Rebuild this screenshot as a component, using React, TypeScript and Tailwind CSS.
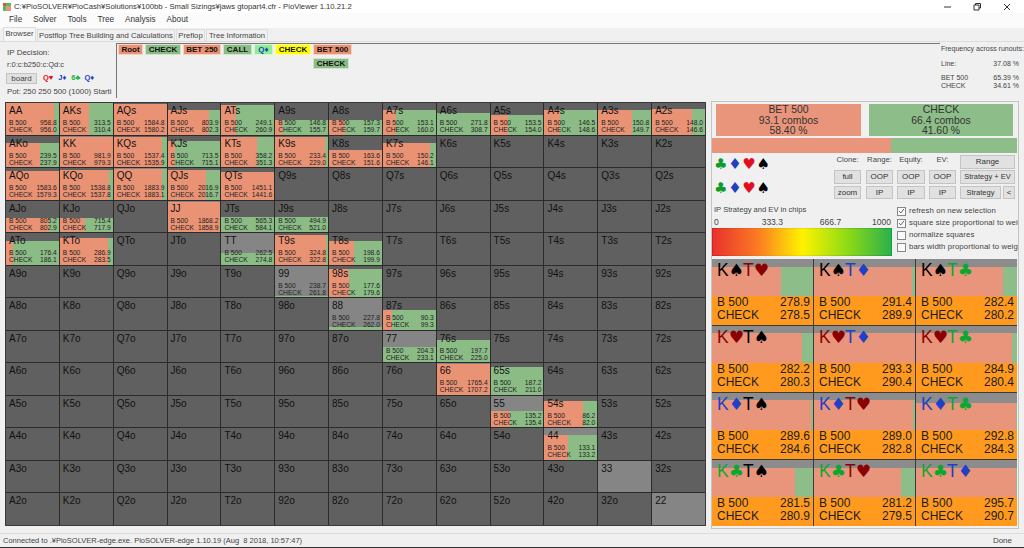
import React from "react";

const RANKS = "AKQJT98765432".split("");
type D = [string, string, number, number];
const DATA: Record<string, D> = {
  AA: ["958.8", "956.0", 0, 90],
  AKs: ["313.5", "310.4", 0, 55],
  AQs: ["1584.8", "1580.2", 1, 100],
  AJs: ["803.9", "802.3", 7, 79],
  ATs: ["249.1", "260.9", 2, 27],
  A9s: ["146.8", "155.7", 17, 14],
  A8s: ["157.3", "159.7", 17, 31],
  A7s: ["153.1", "160.0", 7, 24],
  A6s: ["271.8", "308.7", 10, 0],
  A5s: ["153.5", "154.0", 12, 33],
  A4s: ["146.5", "148.6", 7, 30],
  A3s: ["150.8", "149.7", 7, 63],
  A2s: ["148.0", "146.6", 6, 75],
  AKo: ["239.5", "237.9", 7, 65],
  KK: ["981.9", "979.3", 1, 100],
  KQs: ["1537.4", "1535.9", 1, 91],
  KJs: ["713.5", "715.1", 5, 15],
  KTs: ["358.2", "351.3", 1, 67],
  K9s: ["233.4", "229.0", 1, 95],
  K8s: ["163.6", "151.6", 14, 100],
  K7s: ["150.2", "146.1", 7, 89],
  AQo: ["1583.6", "1579.3", 3, 100],
  KQo: ["1538.8", "1537.8", 2, 93],
  QQ: ["1883.9", "1883.1", 1, 91],
  QJs: ["2016.9", "2016.7", 2, 72],
  QTs: ["1451.1", "1441.6", 4, 100],
  AJo: ["805.2", "802.9", 17, 82],
  KJo: ["715.4", "717.9", 17, 48],
  JJ: ["1868.2", "1858.9", 1, 100],
  JTs: ["565.3", "584.1", 16, 0],
  J9s: ["494.9", "521.0", 16, 0],
  ATo: ["176.4", "186.1", 8, 13],
  KTo: ["286.9", "283.5", 5, 91],
  TT: ["262.5", "274.8", 20, 0],
  T9s: ["324.8", "322.8", 2, 96],
  T8s: ["198.6", "199.9", 8, 48],
  "99": ["238.7", "261.8", 30, 0],
  "98s": ["177.6", "179.6", 3, 37],
  "88": ["227.8", "262.0", 29, 0],
  "87s": ["90.3", "99.3", 12, 18],
  "77": ["204.3", "233.1", 16, 0],
  "76s": ["197.7", "225.0", 9, 0],
  "66": ["1765.4", "1707.2", 1, 100],
  "65s": ["187.2", "211.0", 4, 0],
  "55": ["135.2", "135.4", 15, 37],
  "54s": ["86.2", "82.0", 5, 72],
  "44": ["133.1", "133.2", 7, 44],
};

function Cell({ r, c }: { r: number; c: number }) {
  const label = r === c ? RANKS[r] + RANKS[c] : c > r ? RANKS[r] + RANKS[c] + "s" : RANKS[c] + RANKS[r] + "o";
  const d = DATA[label];
  const pair = r === c;
  return (
    <div className={"relative overflow-hidden " + (pair ? "bg-[#858585]" : "bg-[#606060]")}>
      {d && (
        <div className="absolute inset-x-0 bottom-0 flex" style={{ top: d[2] }}>
          <div className="bg-[#ea9274]" style={{ width: d[3] + "%" }} />
          <div className="flex-1 bg-[#8bbc86]" />
        </div>
      )}
      <div className="relative pl-[3px] pr-[2px] pt-[1px] flex flex-col h-full">
        <div className="text-[10px] leading-[13px] text-[#111]">{label}</div>
        {d && (
          <div className="text-[6.7px] leading-[7px] text-[#222] mt-[2px]">
            <div className="flex justify-between"><span>B 500</span><span>{d[0]}</span></div>
            <div className="flex justify-between"><span>CHECK</span><span>{d[1]}</span></div>
          </div>
        )}
      </div>
    </div>
  );
}

const Crumb = ({ t, cls, w }: { t: string; cls: string; w: string }) => (
  <div className={"h-[11px] border border-white/60 text-[8px] leading-[9px] text-center text-[#111] font-bold whitespace-nowrap " + cls + " " + w}>{t}</div>
);

const Btn = ({ t, cls }: { t: string; cls: string }) => (
  <div className={"border border-[#c4c4c4] bg-[#e1e1e1] text-[#333] text-center flex items-center justify-center whitespace-nowrap " + cls}>{t}</div>
);

const Col = ({ label, a, b, w }: { label: string; a: string; b: string; w: string }) => (
  <div className={"flex flex-col " + w}>
    <div className="h-[15px] text-[7.7px] leading-[9px] text-center text-[#444] whitespace-nowrap">{label}</div>
    <Btn t={a} cls="h-[14px] w-full text-[8px]" />
    <Btn t={b} cls="h-[13px] w-full mt-[2px] text-[8px]" />
  </div>
);

const Suits = () => (
  <div className="flex text-[15px] leading-[13px] w-[60px] pl-[2px] pr-[2px] justify-between font-['DejaVu_Sans']">
    <span className="text-[#0c9c2c]">♣</span>
    <span className="text-[#2040c0]">♦</span>
    <span className="text-[#e01020]">♥</span>
    <span className="text-black">♠</span>
  </div>
);

const Chk = ({ on, t }: { on?: boolean; t: string }) => (
  <div className="flex items-center h-[12px]">
    <div className="w-[9px] h-[9px] border border-[#888] bg-[#fafafa] shrink-0 flex items-center justify-center">
      {on && (
        <svg viewBox="0 0 10 10" className="w-[8px] h-[8px]"><path d="M1.5 5.2 4 7.8 8.5 2" fill="none" stroke="#444" strokeWidth="1.2" /></svg>
      )}
    </div>
    <span className="ml-[3px] text-[7.8px] tracking-[0.1px] text-[#444] whitespace-nowrap">{t}</span>
  </div>
);

const SC: Record<string, string> = { "♠": "text-black", "♥": "text-[#8b0000]", "♦": "text-[#2040c8]", "♣": "text-[#0aa832]" };
const CARDS: [string, string, string, string, number, number][] = [
  ["♠", "♥", "278.9", "278.5", 68, 8],
  ["♠", "♦", "291.4", "289.9", 97, 8],
  ["♠", "♣", "282.4", "280.2", 86, 8],
  ["♥", "♠", "282.2", "280.3", 89, 7],
  ["♥", "♦", "293.3", "290.4", 100, 7],
  ["♥", "♣", "284.9", "280.4", 95, 7],
  ["♦", "♠", "289.6", "284.6", 98, 7],
  ["♦", "♥", "289.0", "282.8", 98, 7],
  ["♦", "♣", "292.8", "284.3", 99, 10],
  ["♣", "♠", "281.5", "280.9", 82, 8],
  ["♣", "♥", "281.2", "279.5", 86, 8],
  ["♣", "♦", "295.7", "290.7", 99, 8],
];

const Glyph = ({ s }: { s: string }) => (
  <span className="font-['DejaVu_Sans'] text-[17px] tracking-[-1px]">{s}</span>
);

function Card({ d }: { d: (typeof CARDS)[number] }) {
  return (
    <div className="relative flex flex-col bg-[#8c8c8c] overflow-hidden">
      <div className="relative flex-1">
        <div className="absolute inset-x-0 bottom-0 flex" style={{ top: d[5] }}>
          <div className="bg-[#e9957b]" style={{ width: d[4] + "%" }} />
          <div className="flex-1 bg-[#8dbd88]" />
        </div>
        <div className="relative pl-[5px] pt-[2px] text-[17.5px] leading-[19px] whitespace-nowrap">
          <span className={SC[d[0]]}>K<Glyph s={d[0]} /></span>
          <span className={SC[d[1]]}>T<Glyph s={d[1]} /></span>
        </div>
      </div>
      <div className="h-[29px] bg-[#ff9a1f] pl-[5px] pr-[3px] pt-[0px] text-[12px] leading-[13px] text-[#1c1c1c]">
        <div className="flex justify-between"><span>B 500</span><span>{d[2]}</span></div>
        <div className="flex justify-between"><span>CHECK</span><span>{d[3]}</span></div>
      </div>
    </div>
  );
}

export default function App() {
  return (
    <div className="w-[1024px] h-[548px] overflow-hidden bg-[#f0f0f0] flex flex-col font-['Liberation_Sans',sans-serif] text-[#333]">
      {/* title */}
      <div className="h-[13px] bg-white flex items-center shrink-0 relative">
        <svg viewBox="0 0 8 8" className="w-[8px] h-[8px] ml-[3px]">
          <rect width="3" height="3" fill="#d9534f" /><rect x="3" width="5" height="3" fill="#5cb85c" />
          <rect y="3" width="3" height="5" fill="#5cb85c" /><rect x="3" y="3" width="5" height="5" fill="#e9957b" />
        </svg>
        <span className="ml-[3px] text-[7.7px] leading-[13px] text-[#333] whitespace-nowrap">
          C:¥PioSOLVER¥PioCash¥Solutions¥100bb - Small Sizings¥jaws gtopart4.cfr - PioViewer 1.10.21.2
        </span>
        <div className="ml-auto flex items-center gap-[20px] mr-[12px]">
          <svg viewBox="0 0 10 10" className="w-[10px] h-[10px]"><path d="M2 5h7" stroke="#333" /></svg>
          <svg viewBox="0 0 10 10" className="w-[10px] h-[10px]"><path d="M2 3h5v5H2zM3.5 3V1.5H8.5V6H7" fill="none" stroke="#333" /></svg>
          <svg viewBox="0 0 10 10" className="w-[10px] h-[10px]"><path d="M2 2l6 6M8 2l-6 6" stroke="#333" /></svg>
        </div>
      </div>
      {/* menu */}
      <div className="h-[15px] bg-[#fbfbfb] flex items-center pl-[9px] text-[8.2px] gap-[11px] text-[#333] shrink-0">
        <span>File</span><span>Solver</span><span>Tools</span><span>Tree</span><span>Analysis</span><span>About</span>
      </div>
      {/* tabs */}
      <div className="h-[14px] flex items-end pl-[3px] text-[7.7px] leading-[11px] shrink-0 whitespace-nowrap text-[#444] border-b border-[#dcdcdc]">
        <div className="w-[33px] h-[14px] bg-[#f6f6f6] border border-b-0 border-[#ddd] text-center">Browser</div>
        <div className="w-[138px] h-[12px] ml-[1px] border border-b-0 border-[#ddd] text-center">Postflop Tree Building and Calculations</div>
        <div className="w-[29px] h-[12px] ml-[1px] border border-b-0 border-[#ddd] text-center">Preflop</div>
        <div className="w-[62px] h-[12px] ml-[1px] border border-b-0 border-[#ddd] text-center">Tree Information</div>
      </div>
      {/* top row */}
      <div className="h-[57px] flex shrink-0">
        <div className="w-[116px] pl-[7px] text-[8px] text-[#444] overflow-hidden whitespace-nowrap shrink-0">
          <div className="mt-[5px] leading-[11px]">IP Decision:</div>
          <div className="mt-[2px] leading-[10px] text-[7.5px]">r:0:c:b250:c:Qd:c</div>
          <div className="flex items-center mt-[2px] h-[12px]">
            <div className="-ml-[1px] w-[31px] h-[11px] border border-[#c4c4c4] bg-[#e1e1e1] text-center leading-[9px]">board</div>
            <div className="ml-[6px] flex gap-[4px] font-bold text-[7.5px]">
              <span className="text-[#e01020]">Q♥</span>
              <span className="text-[#2040c8] ml-[1px]">J♦</span>
              <span className="text-[#20b040] ml-[1px]">6♣</span>
              <span className="text-[#2040c8]">Q♦</span>
            </div>
          </div>
          <div className="mt-[2px] leading-[11px] text-[7.8px]">Pot: 250 250 500 (1000) Starti</div>
        </div>
        <div className="mt-[1px] w-[824px] h-[55px] border-l border-t border-[#777] pl-[1px] shrink-0">
          <div className="flex gap-[2px]">
            <Crumb t="Root" cls="bg-[#ea9274]" w="w-[25px]" />
            <Crumb t="CHECK" cls="bg-[#8bbc86]" w="w-[36px]" />
            <Crumb t="BET 250" cls="bg-[#ea9274]" w="w-[38px]" />
            <Crumb t="CALL" cls="bg-[#8bbc86]" w="w-[29px]" />
            <Crumb t="Q♦" cls="bg-[#90ee90] !text-[#2040c8]" w="w-[19px]" />
            <Crumb t="CHECK" cls="bg-[#ffff00]" w="w-[36px]" />
            <div className="flex flex-col gap-[3px]">
              <Crumb t="BET 500" cls="bg-[#ea9274]" w="w-[39px]" />
              <Crumb t="CHECK" cls="bg-[#8bbc86]" w="w-[36px]" />
            </div>
          </div>
        </div>
        <div className="w-[84px] min-w-0 shrink-0 pl-[1px] pr-[5px] text-[7px] leading-[8px] text-[#444] overflow-hidden">
          <div className="mt-[3px] whitespace-nowrap">Frequency across runouts:</div>
          <div className="flex justify-between mt-[7px]"><span>Line:</span><span>37.08 %</span></div>
          <div className="flex justify-between mt-[6px]"><span>BET 500</span><span>65.39 %</span></div>
          <div className="flex justify-between"><span>CHECK</span><span>34.61 %</span></div>
        </div>
      </div>
      {/* main */}
      <div className="flex flex-1 min-h-0 mt-[3px]">
        <div className="ml-[5px] w-[701px] h-[424px] grid grid-cols-13 grid-rows-13 gap-px bg-[#2b2b2b] border border-[#3a3a3a] shrink-0">
          {RANKS.map((_, r) => RANKS.map((_, c) => <Cell key={r + "-" + c} r={r} c={c} />))}
        </div>
        <div className="ml-[5px] w-[308px] h-[428px] -mt-[1px] border border-[#c4c4c4] flex flex-col shrink-0">
          <div className="flex gap-[8px] pl-[4px] mt-[2px] text-[10.4px] leading-[10.5px] text-[#333] text-center">
            <div className="w-[145px] h-[32px] bg-[#e9957b] pt-[1px]"><div>BET 500</div><div>93.1 combos</div><div>58.40 %</div></div>
            <div className="w-[144px] h-[32px] bg-[#8dbd88] pt-[1px]"><div>CHECK</div><div>66.4 combos</div><div>41.60 %</div></div>
          </div>
          <div className="flex h-[15px] mt-[2px] w-[305px]">
            <div className="w-[179px] bg-[#e9957b]" />
            <div className="flex-1 bg-[#8dbd88]" />
          </div>
          <div className="flex mt-[2px] h-[45px]">
            <div className="w-[122px] flex flex-col gap-[11px] pt-[3px]">
              <Suits /><Suits />
            </div>
            <Col label="Clone:" a="full" b="zoom" w="w-[27px]" />
            <Col label="Range:" a="OOP" b="IP" w="w-[27px] ml-[5px]" />
            <Col label="Equity:" a="OOP" b="IP" w="w-[28px] ml-[4px]" />
            <Col label="EV:" a="OOP" b="IP" w="w-[27px] ml-[4px]" />
            <div className="ml-[4px] w-[55px] flex flex-col">
              <Btn t="Range" cls="h-[14px] text-[8px]" />
              <Btn t="Strategy + EV" cls="h-[14px] mt-[1px] text-[7.5px]" />
              <div className="flex gap-[2px] mt-[2px] h-[13px]">
                <Btn t="Strategy" cls="w-[41px] text-[7.5px]" />
                <Btn t="<" cls="flex-1 text-[8px]" />
              </div>
            </div>
          </div>
          <div className="flex mt-[4px]">
            <div className="w-[180px] shrink-0">
              <div className="h-[11px] pl-[2px] text-[7.6px] leading-[11px] text-[#444] whitespace-nowrap">IP Strategy and EV in chips</div>
              <div className="flex justify-between pl-[2px] pr-[1px] mt-[1px] h-[12px] text-[8.5px] leading-[12px] text-[#444]">
                <span>0</span><span className="ml-[12px]">333.3</span><span className="ml-[6px]">666.7</span><span>1000</span>
              </div>
              <div className="h-[28px] p-px bg-[linear-gradient(to_right,#d81e2a,#f0e000_50%,#0ea040)]">
                <div className="h-full bg-[linear-gradient(to_right,#e8322c,#fb7a24_25%,#fff200_50%,#90dc14_75%,#2eb04c)]" />
              </div>
            </div>
            <div className="ml-[5px] overflow-hidden flex-1 min-w-0 pt-[1px]">
              <Chk on t="refresh on new selection" />
              <Chk on t="square size proportional to weight" />
              <Chk t="normalize squares" />
              <Chk t="bars width proportional to weight" />
            </div>
          </div>
          <div className="mt-[3px] w-[305px] h-[267px] grid grid-cols-3 grid-rows-4 gap-px bg-[#3a3a3a]">
            {CARDS.map((d, i) => <Card key={i} d={d} />)}
          </div>
        </div>
      </div>
      {/* status */}
      <div className="h-[15px] shrink-0 border-t border-[#dcdcdc] flex items-center justify-between pl-[3px] pr-[12px] text-[7.5px] text-[#444] border-b border-b-[#333]">
        <span className="whitespace-pre">Connected to .¥PioSOLVER-edge.exe. PioSOLVER-edge 1.10.19 (Aug  8 2018, 10:57:47)</span>
        <span className="text-[8px]">Done</span>
      </div>
    </div>
  );
}
